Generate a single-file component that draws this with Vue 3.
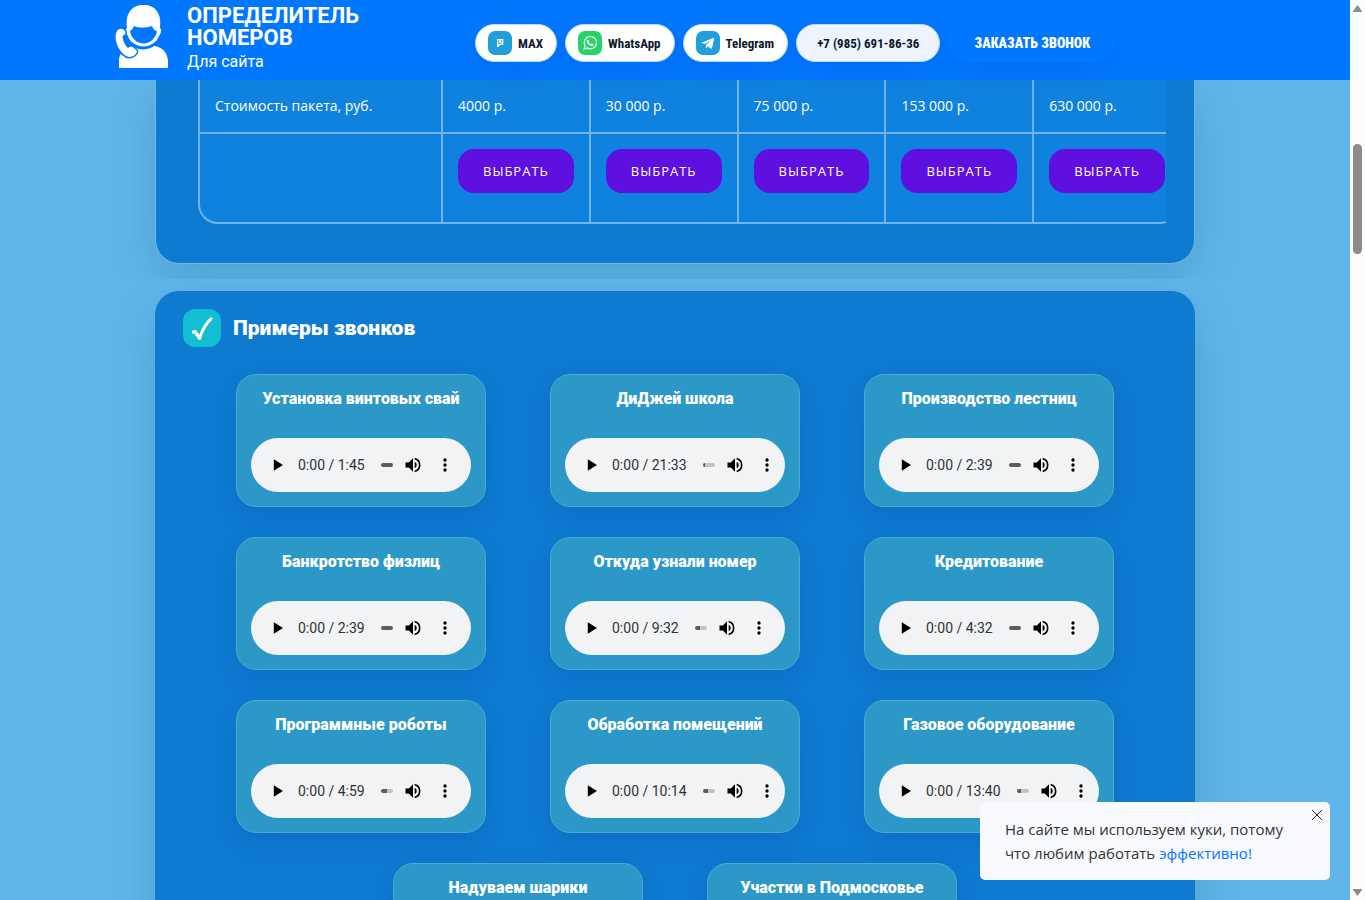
<template>
  <div class="window">
    <div class="page">
      <header class="header">
        <div class="header-inner">
          <a href="#" class="logo">
            <svg class="logo-icon" viewBox="0 0 54 66" fill="#fff" aria-hidden="true">
              <path d="M4 64v-7c0-8 5-12 14-14.500 6 4 15 4 21-.5 9 1 13 7 14 14v8z" />
              <path d="M12 24C10 9 17 1 28.500 1S47 9 45 24c2 1 1 6-1 8-2 6-9 10.500-15.500 10.500S14.500 38 13 32c-2-2-3-7-1-8zM15 27c1 7 7 12.500 13.500 12.500S41 34 42 27c-2 0-4-2-5-5-7 2-13 2-18 0-1 2-2 4-4 5z" fill-rule="evenodd" />
              <path class="logo-phone" d="M2 27c2-3 6-3 8 0 1 2 0 4-2.500 5 0 4 2.500 9 5.500 12 2-2 4-2 6 0l3 3c0 3-4 6-8 6C6 52-3 36 2 27z" />
            </svg>
            <span class="logo-text">
              <strong>ОПРЕДЕЛИТЕЛЬ<br>НОМЕРОВ</strong>
              <span>Для сайта</span>
            </span>
          </a>

          <nav class="contacts">
            <a href="#" class="pill">
              <span class="pill-icon">
                <svg viewBox="0 0 24 24" fill="none" stroke="#fff" stroke-width="1.3">
                  <path d="M9.7 16V8.700h5v4.500H12l-2 2.500M12 8.700v2.400h2.700" />
                </svg>
              </span>
              MAX
            </a>
            <a href="#" class="pill">
              <span class="pill-icon pill-icon--green">
                <svg viewBox="0 0 24 24">
                  <path d="M6.2 18l.9-3.1A6.2 6.2 0 1 1 9.3 17z" fill="none" stroke="#fff" stroke-width="1.2" />
                  <path d="M9.7 8.7c.7-.5 1 .1 1.3 1.2l-.5.9c.6 1.1 1.4 1.9 2.5 2.4l.9-.9 1.8.9c0 1.5-1.1 2.1-2.3 1.8-2.7-.7-4.4-2.5-4.8-4.5-.1-.8.3-1.4 1.1-1.8z" fill="#fff" />
                </svg>
              </span>
              WhatsApp
            </a>
            <a href="#" class="pill">
              <span class="pill-icon">
                <svg viewBox="0 0 24 24" fill="#fff">
                  <path d="M5.2 12.1 17 7.1c.7-.3 1.2.1 1 .9l-2 9.1c-.2.7-.6.8-1.2.5l-3-2.2-1.5 1.5c-.2.2-.4.2-.5-.2l.2-3 5.6-5-6.9 4.3-3.3-1c-.6-.2-.7-.6-.2-.9z" />
                </svg>
              </span>
              Telegram
            </a>
            <a href="tel:+79856918636" class="pill pill--phone">+7 (985) 691-86-36</a>
            <button type="button" class="callback">ЗАКАЗАТЬ ЗВОНОК</button>
          </nav>
        </div>
      </header>

      <main class="content">
        <section class="section section--prices">
          <div class="panel panel--prices">
            <div class="table-wrap">
              <table class="prices">
                <tbody>
                  <tr>
                    <th scope="row">Стоимость пакета, руб.</th>
                    <td v-for="price in prices" :key="price">{{ price }}</td>
                  </tr>
                  <tr class="prices-actions">
                    <td></td>
                    <td v-for="price in prices" :key="price">
                      <button type="button" class="choose">ВЫБРАТЬ</button>
                    </td>
                  </tr>
                </tbody>
              </table>
            </div>
          </div>
        </section>

        <section class="section section--calls">
          <div class="panel panel--calls">
            <h2 class="panel-title">
              <span class="panel-badge">
                <svg viewBox="0 0 38 38" fill="none" stroke="#fff" stroke-linecap="round" stroke-linejoin="round">
                  <path d="M10.500 23l1.500-.3 4.500 6.300" stroke-width="3.500" />
                  <path d="M16.500 29.200C19 22 22.500 14.500 28 9.800" stroke-width="3" />
                </svg>
              </span>
              Примеры звонков
            </h2>

            <div class="calls">
              <article v-for="call in calls" :key="call.title" class="call">
                <h3 class="call-title">{{ call.title }}</h3>
                <div class="player">
                  <button type="button" class="player-button" aria-label="Воспроизвести">
                    <svg viewBox="0 0 24 24"><path d="M7 5v14l11-7z" /></svg>
                  </button>
                  <span class="player-time">0:00 / {{ call.duration }}</span>
                  <input
                    type="range"
                    class="player-track"
                    min="0"
                    max="100"
                    value="0"
                    aria-label="Позиция"
                    :style="{ '--loaded': `${call.loaded}%` }"
                  >
                  <button type="button" class="player-button" aria-label="Звук">
                    <svg viewBox="0 0 24 24">
                      <path d="M3 9v6h4l5 5V4L7 9H3zm13.5 3A4.5 4.5 0 0 0 14 7.97v8.05A4.5 4.5 0 0 0 16.5 12zM14 3.23v2.06a7 7 0 0 1 0 13.42v2.06a9 9 0 0 0 0-17.54z" />
                    </svg>
                  </button>
                  <button type="button" class="player-button" aria-label="Ещё">
                    <svg viewBox="0 0 24 24">
                      <path d="M12 8a2 2 0 1 0 0-4 2 2 0 0 0 0 4zm0 2a2 2 0 1 0 0 4 2 2 0 0 0 0-4zm0 6a2 2 0 1 0 0 4 2 2 0 0 0 0-4z" />
                    </svg>
                  </button>
                </div>
              </article>
            </div>
          </div>
        </section>
      </main>
    </div>

    <div class="scrollbar" aria-hidden="true">
      <svg class="scrollbar-arrow" viewBox="0 0 9 7"><path d="M4.500 0 9 6.300V7H0V6.300z" /></svg>
      <div class="scrollbar-track">
        <div class="scrollbar-thumb"></div>
      </div>
      <svg class="scrollbar-arrow" viewBox="0 0 9 7"><path d="M4.500 7 9 .7V0H0V.7z" /></svg>
    </div>

    <aside v-if="showCookies" class="cookies">
      <p>На сайте мы используем куки, потому что любим работать <a href="#">эффективно!</a></p>
      <button type="button" class="cookies-close" aria-label="Закрыть" @click="showCookies = false">
        <svg viewBox="0 0 10 10" fill="none" stroke="#222"><path d="M0 0l10 10M10 0L0 10" /></svg>
      </button>
    </aside>
  </div>
</template>

<script setup>
import { ref } from 'vue';

const showCookies = ref(true);

const prices = ['4000 р.', '30 000 р.', '75 000 р.', '153 000 р.', '630 000 р.'];

const calls = [
  { title: 'Установка винтовых свай', duration: '1:45', loaded: 100 },
  { title: 'ДиДжей школа', duration: '21:33', loaded: 15 },
  { title: 'Производство лестниц', duration: '2:39', loaded: 100 },
  { title: 'Банкротство физлиц', duration: '2:39', loaded: 100 },
  { title: 'Откуда узнали номер', duration: '9:32', loaded: 40 },
  { title: 'Кредитование', duration: '4:32', loaded: 100 },
  { title: 'Программные роботы', duration: '4:59', loaded: 50 },
  { title: 'Обработка помещений', duration: '10:14', loaded: 40 },
  { title: 'Газовое оборудование', duration: '13:40', loaded: 35 },
  { title: 'Надуваем шарики', duration: '3:12', loaded: 100 },
  { title: 'Участки в Подмосковье', duration: '2:51', loaded: 100 },
];
</script>

<style>
body {
  margin: 0;
}
</style>

<style scoped>
* {
  box-sizing: border-box;
}

.window {
  display: flex;
  height: 100vh;
  overflow: hidden;
  background: #61b5eb;
  color: #fff;
  font-family: Roboto, sans-serif;
}

.page {
  flex: 1;
  min-width: 0;
}

a {
  color: inherit;
  text-decoration: none;
}

button {
  border: 0;
  padding: 0;
  font: inherit;
  color: inherit;
  cursor: pointer;
}

svg {
  display: block;
}

.header {
  position: relative;
  z-index: 2;
  height: 80px;
  background: #0077ff;
}

.header-inner {
  display: flex;
  max-width: 1120px;
  margin: 0 auto;
}

.logo {
  display: flex;
  flex: 0 0 360px;
  gap: 18px;
  padding-top: 4px;
}

.logo-icon {
  width: 54px;
  height: 66px;
}

.logo-phone {
  stroke: #0077ff;
  stroke-width: 3px;
  paint-order: stroke;
}

.logo-text {
  padding-top: 1px;
  font-size: 16px;
  line-height: 26px;
}

.logo-text strong {
  display: block;
  font-size: 22px;
  line-height: 22px;
}

.contacts {
  display: flex;
  gap: 8px;
  padding: 24px 0 18px;
}

.pill {
  display: flex;
  align-items: center;
  gap: 6px;
  height: 38px;
  padding: 0 13px 0 12px;
  border: 1px solid #b8dcff;
  border-radius: 19px;
  background: #fff;
  box-shadow: 0 8px 20px rgba(0, 60, 160, 0.12);
  color: #0f172a;
  font-family: "Roboto Condensed", Roboto, sans-serif;
  font-size: 13px;
  font-weight: 700;
  white-space: nowrap;
}

.pill--phone {
  padding: 0 20px;
  background: #edf4ff;
}

.pill-icon {
  width: 24px;
  height: 24px;
  border-radius: 7px;
  background: #229ed9;
}

.pill-icon--green {
  background: #25d366;
}

.callback {
  height: 38px;
  padding: 0 26px;
  border-radius: 19px;
  background: #0077ff;
  box-shadow: 0 8px 20px rgba(0, 60, 160, 0.12);
  font-family: "Roboto Condensed", Roboto, sans-serif;
  font-size: 14px;
  font-weight: 900;
  white-space: nowrap;
}

.section {
  padding: 12px 40px 15px;
  overflow: hidden;
}

.section--prices {
  padding-top: 0;
}

.panel {
  max-width: 1040px;
  margin: 0 auto;
  border-radius: 24px;
  background: #0e7ad0;
  box-shadow: 0 16px 45px rgba(20, 110, 120, 0.26);
}

.panel--prices {
  padding: 0 28px 39px;
  border: 1px solid #6eb4e9;
  border-top: 0;
  border-radius: 0 0 24px 24px;
}

.panel--calls {
  padding: 18px 28px 40px;
}

.table-wrap {
  padding-left: 14px;
  overflow: hidden;
}

.prices {
  width: 982px;
  table-layout: fixed;
  border-spacing: 0;
  border-radius: 0 0 20px 20px;
  background: #0f81df;
  font-family: "Open Sans", "Noto Sans", sans-serif;
  font-size: 14px;
  line-height: 22px;
}

.prices th,
.prices td {
  padding: 15px;
  border-left: 2px solid #70b4ec;
  border-bottom: 2px solid #70b4ec;
  font-weight: 400;
  text-align: left;
  vertical-align: top;
}

.prices th {
  width: 243px;
}

.prices-actions td {
  height: 90px;
}

.prices-actions td:first-child {
  border-bottom-left-radius: 20px;
}

.prices-actions td:last-child {
  border-bottom-right-radius: 20px;
}

.choose {
  display: block;
  width: 100%;
  height: 44px;
  border-radius: 16px;
  background: #5f0fdf;
  font-size: 13px;
  letter-spacing: 1px;
}

.panel-title {
  display: flex;
  align-items: center;
  gap: 12px;
  margin: 0 0 27px;
  font-size: 21px;
  font-weight: 900;
  line-height: 38px;
}

.panel-badge {
  width: 38px;
  height: 38px;
  border-radius: 12px;
  background: #14bed2;
}

.calls {
  display: flex;
  flex-wrap: wrap;
  justify-content: center;
  gap: 30px 64px;
}

.call {
  width: 250px;
  padding: 14px;
  border: 1px solid #4ba9d3;
  border-radius: 20px;
  background: #2c98c8;
  box-shadow: 0 10px 24px rgba(10, 70, 160, 0.2);
}

.call-title {
  margin: 0 0 30px;
  font-size: 16px;
  font-weight: 900;
  line-height: 19px;
  text-align: center;
}

.player {
  display: flex;
  align-items: center;
  height: 54px;
  padding-left: 11px;
  border-radius: 27px;
  background: #f1f3f4;
  overflow: hidden;
}

.player-button {
  display: flex;
  flex: none;
  align-items: center;
  justify-content: center;
  width: 32px;
  height: 32px;
  background: none;
}

.player-button svg {
  width: 20px;
  height: 20px;
}

.player-time {
  flex: none;
  margin: 0 16px 0 4px;
  color: #303234;
  font-size: 14px;
}

.player-track {
  flex: none;
  width: 12px;
  height: 4px;
  margin: 0 4px 0 0;
  border-radius: 2px;
  background: linear-gradient(to right, #5b5c5c var(--loaded), #c1c3c4 var(--loaded));
  appearance: none;
}

.player-track::-webkit-slider-thumb {
  width: 0;
  height: 0;
  appearance: none;
}

.scrollbar {
  display: flex;
  flex: none;
  flex-direction: column;
  align-items: center;
  width: 15px;
  padding: 5px 0 4px;
  background: #fcfcfc;
}

.scrollbar-arrow {
  width: 9px;
  height: 7px;
  fill: #8b8b8b;
}

.scrollbar-track {
  flex: 1;
  padding-top: 132px;
}

.scrollbar-thumb {
  width: 9px;
  height: 110px;
  border-radius: 5px;
  background: #8b8b8b;
}

.cookies {
  position: fixed;
  right: 35px;
  bottom: 20px;
  z-index: 3;
  width: 350px;
  padding: 15px 25px;
  border-radius: 5px;
  background: #f8f9fe;
  color: #333;
  font-family: "Open Sans", "Noto Sans", sans-serif;
  font-size: 15px;
  line-height: 24px;
}

.cookies p {
  margin: 0;
}

.cookies a {
  color: #0077ff;
}

.cookies-close {
  position: absolute;
  top: 8px;
  right: 8px;
  background: none;
}

.cookies-close svg {
  width: 10px;
  height: 10px;
}
</style>
